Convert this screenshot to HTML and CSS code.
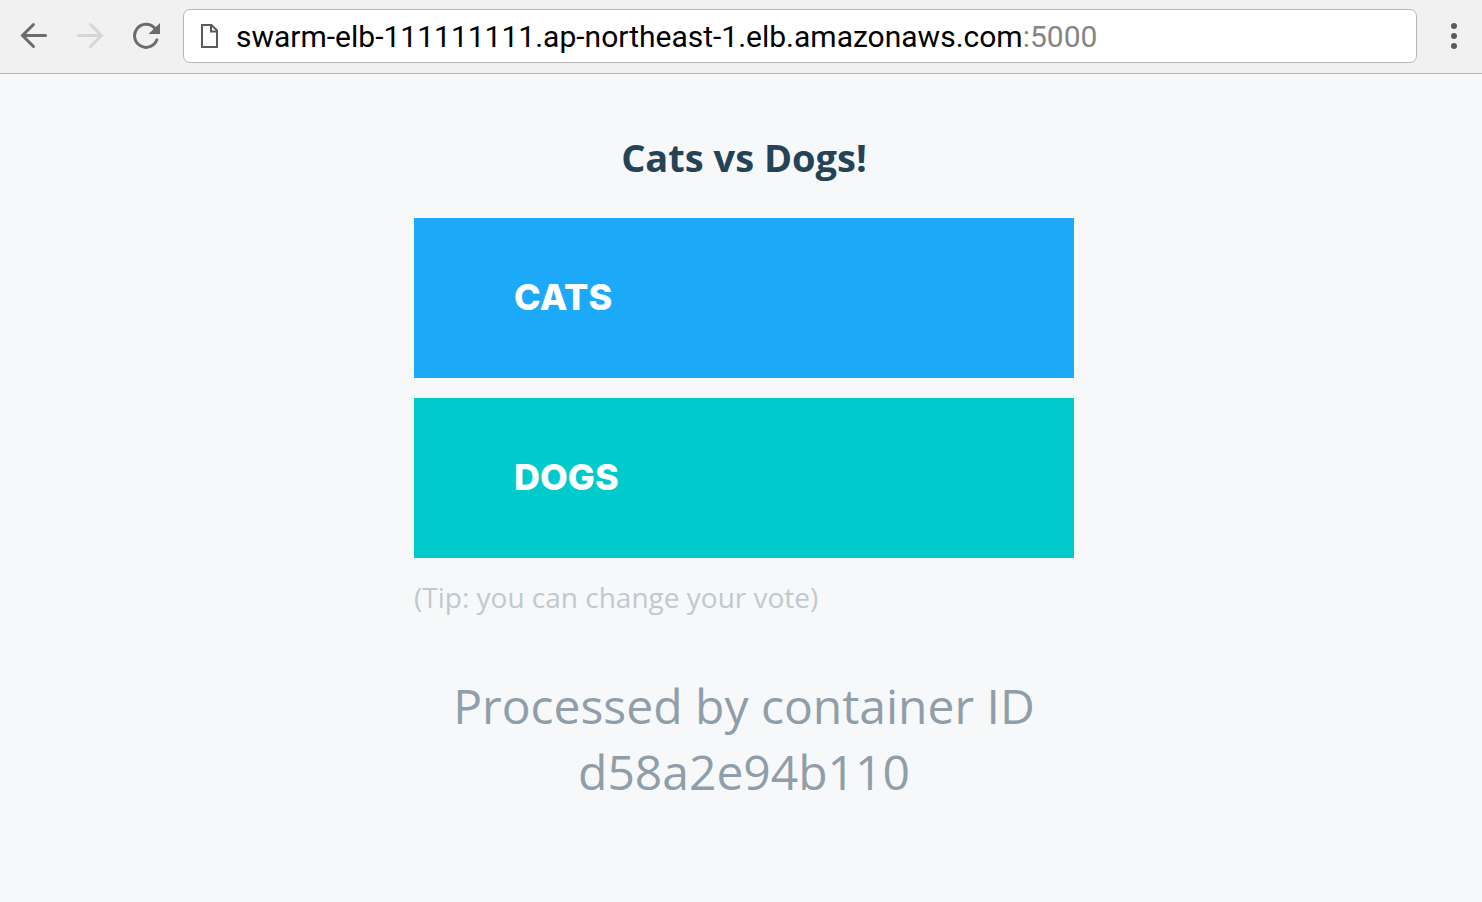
FILE: index.html
```html
<!DOCTYPE html>
<html lang="en">
	<head>
		<meta charset="utf-8">
		<title>Cats vs Dogs!</title>
		<link rel="stylesheet" href="styles.css">
	</head>
	<body>
		<header class="toolbar">
			<button class="tool" type="button" aria-label="Back">
				<svg width="28" height="28" viewBox="0 0 28 28"><path d="M25.500 13.500H3M13.500 2.500L2.500 13.500l11 11"/></svg>
			</button>
			<button class="tool" type="button" aria-label="Forward" disabled>
				<svg width="28" height="28" viewBox="0 0 28 28"><path d="M2.500 13.500h22.500M14.500 2.500L25.500 13.500l-11 11"/></svg>
			</button>
			<button class="tool" type="button" aria-label="Reload">
				<svg width="28" height="28" viewBox="0 0 28 28"><path d="M22.500 6A11.500 11.500 0 1 0 24.800 18"/><path class="solid" d="M28 1v11H16.500z"/></svg>
			</button>
			<div class="address">
				<svg class="page-icon" width="18" height="26" viewBox="0 0 18 26"><path d="M1 2h9.500L16 7.500V24H1z"/><path d="M10 2v6.500h6"/></svg>
				<input class="host" type="text" aria-label="Address" value="swarm-elb-111111111.ap-northeast-1.elb.amazonaws.com" spellcheck="false"><span class="port">:5000</span>
			</div>
			<button class="menu" type="button" aria-label="Menu">
				<svg width="8" height="28" viewBox="0 0 8 28"><circle cx="4" cy="4" r="3"/><circle cx="4" cy="14" r="3"/><circle cx="4" cy="24" r="3"/></svg>
			</button>
		</header>
		<main class="content">
			<h1>Cats vs Dogs!</h1>
			<form class="choice">
				<button class="vote cats" type="button" name="vote" value="a">CATS</button>
				<button class="vote dogs" type="button" name="vote" value="b">DOGS</button>
			</form>
			<p class="tip">(Tip: you can change your vote)</p>
			<p class="hostname">Processed by container ID d58a2e94b110</p>
		</main>
	</body>
</html>
```
FILE: styles.css
```css
* { box-sizing: border-box; }
body {
	background-color: #F7F8FA;
	font-family: "Open Sans", sans-serif;
	margin: 0;
	}
button {
	background: none;
	border: 0;
	padding: 0;
	}
svg { display: block; }

/* browser toolbar */
.toolbar {
	align-items: center;
	background-color: #F1F1F1;
	border-bottom: 1px solid #B6B6B6;
	display: flex;
	gap: 28px;
	padding: 9px 24px 10px 20px;
	}
.tool path {
	fill: none;
	stroke: #6B6B6B;
	stroke-linecap: round;
	stroke-width: 3;
	}
.tool:disabled path { stroke: #D6D6D6; }
.tool .solid {
	fill: #6B6B6B;
	stroke: none;
	}
.address {
	align-items: center;
	background-color: #FFF;
	border: 1px solid #B6B6B6;
	border-radius: 7px;
	display: flex;
	flex: 1;
	font-family: Roboto, sans-serif;
	font-size: 30px;
	height: 54px;
	margin: 0 5px 0 -5px;
	padding: 0 17px;
	}
.page-icon {
	fill: none;
	margin-right: 17px;
	stroke: #5A5A5A;
	stroke-width: 2;
	}
.host {
	border: 0;
	color: #000;
	field-sizing: content;
	font: inherit;
	outline: 0;
	padding: 0;
	}
.port { color: #858585; }
.menu { fill: #5A5A5A; }

/* voting page */
.content {
	margin: 0 auto;
	padding: 56px 0 0 6px;
	width: 666px;
	}
h1 {
	color: #254356;
	font-size: 38px;
	line-height: 54px;
	margin: 0 0 34px;
	text-align: center;
	}
.choice {
	display: grid;
	gap: 20px;
	}
.vote {
	color: #FFF;
	font-family: Inter, sans-serif;
	font-size: 36px;
	font-weight: 800;
	height: 160px;
	padding: 0 0 2px 100px;
	text-align: left;
	}
.cats { background-color: #1CA9F9; }
.dogs { background-color: #00CBCC; }
.tip {
	color: #C0C9CE;
	font-size: 28px;
	line-height: 40px;
	margin: 19px 0 56px;
	}
.hostname {
	color: #8F9EA8;
	font-size: 48px;
	line-height: 66px;
	margin: 0;
	text-align: center;
	}
```
